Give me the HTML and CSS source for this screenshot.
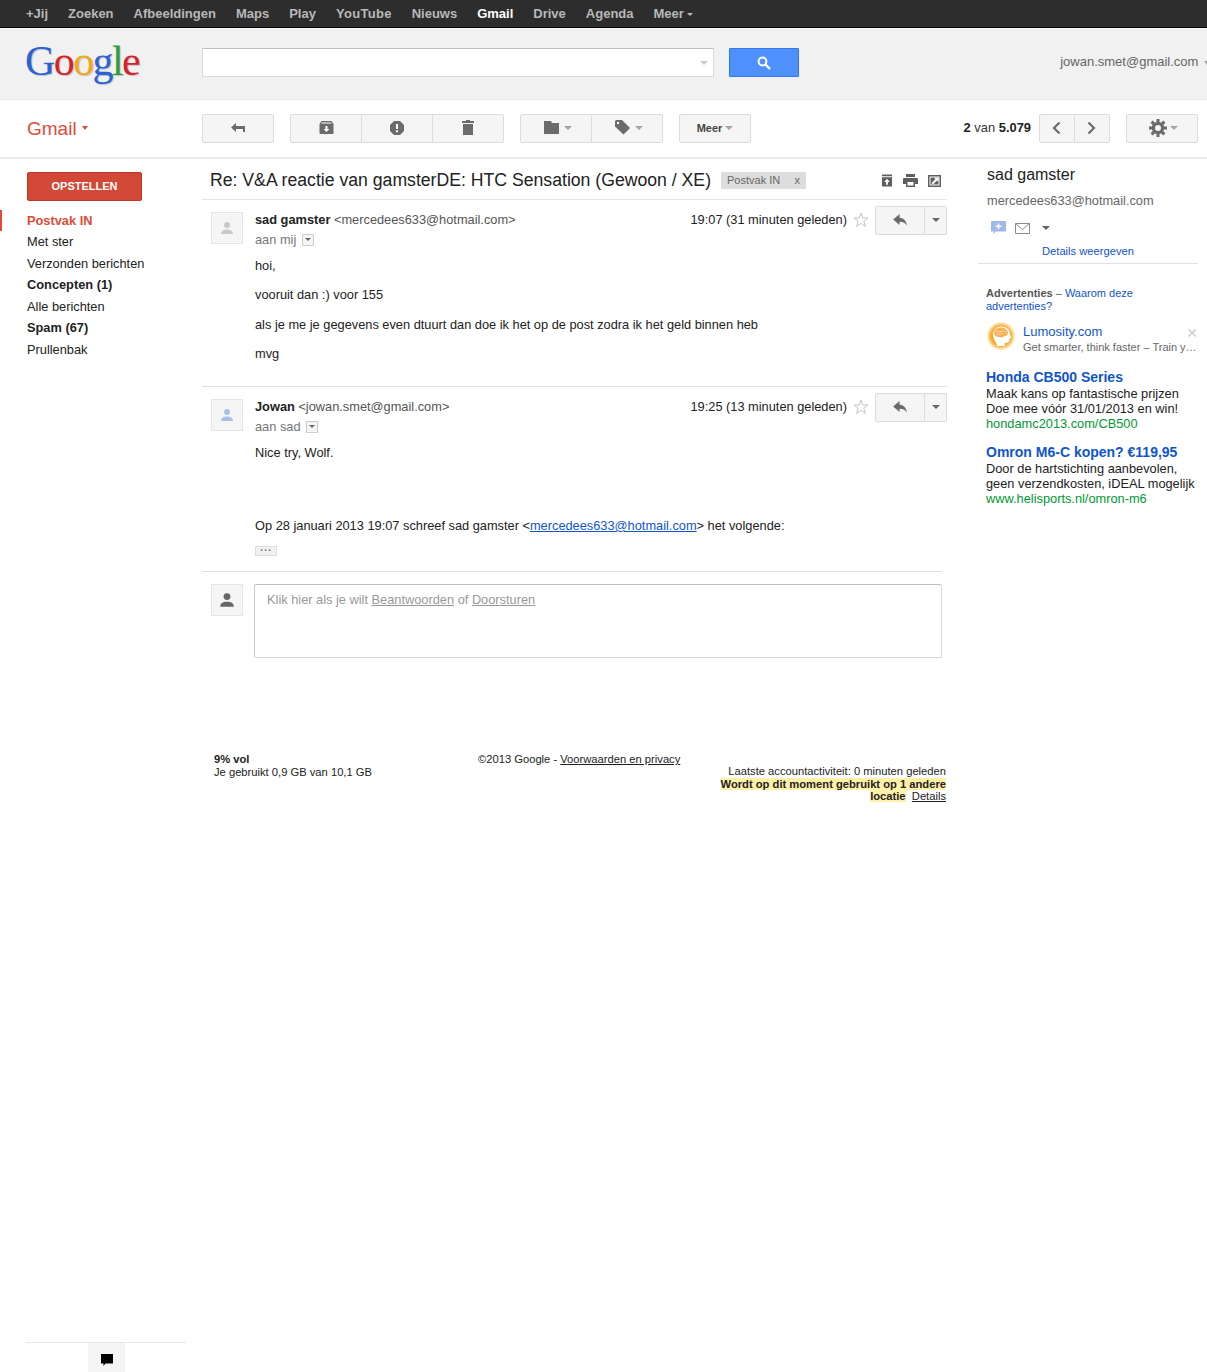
FILE: index.html
```html
<!DOCTYPE html>
<html lang="nl">
<head>
  <meta charset="UTF-8">
  <meta name="viewport" content="width=device-width, initial-scale=1.0">
  <title>Gmail - Re: V&amp;A reactie van gamsterDE</title>
  <link rel="stylesheet" href="styles.css">
</head>
<body>
  <!-- Zwarte balk -->
  <nav class="topbar">
    <a>+Jij</a><a>Zoeken</a><a>Afbeeldingen</a><a>Maps</a><a>Play</a><a class="wide">YouTube</a><a>Nieuws</a><a class="active">Gmail</a><a>Drive</a><a>Agenda</a><a>Meer <i class="caret caret-light"></i></a>
  </nav>

  <!-- Logo en zoeken -->
  <header class="searchbar">
    <div class="logo"><span class="c-blue">G</span><span class="c-red">o</span><span class="c-yellow">o</span><span class="c-blue">g</span><span class="c-green">l</span><span class="c-red">e</span></div>
    <div class="searchbox"><i class="caret caret-pale"></i></div>
    <button class="searchbtn">
      <svg width="14" height="14" viewBox="0 0 14 14"><circle cx="5.5" cy="5.5" r="3.9" fill="none" stroke="#fff" stroke-width="2"/><path d="M8.4 8.4 13 13" stroke="#fff" stroke-width="2.4"/></svg>
    </button>
    <div class="account">jowan.smet@gmail.com <i class="caret caret-grey"></i></div>
  </header>

  <!-- Knoppenbalk -->
  <div class="toolbar">
    <div class="gmail-label">Gmail <i class="caret caret-red"></i></div>
    <div class="btn-group first">
      <button class="tbtn">
        <svg width="16" height="12" viewBox="0 0 16 12"><path d="M6 1 1 5.5 6 10V7h7v3h2V4H6z" fill="#6b6b6b"/></svg>
      </button>
    </div>
    <div class="btn-group">
      <button class="tbtn">
        <svg width="15" height="13" viewBox="0 0 14 13"><path d="M2 0h10l2 3v9a1 1 0 0 1-1 1H1a1 1 0 0 1-1-1V3z" fill="#6b6b6b"/><path d="M2 2h10" stroke="#fff"/><path d="M6 5h2v3h2l-3 3-3-3h2z" fill="#fff"/></svg>
      </button>
      <button class="tbtn">
        <svg width="14" height="14" viewBox="0 0 14 14"><path d="M4 0h6l4 4v6l-4 4H4l-4-4V4z" fill="#6b6b6b"/><path d="M6 3h2v5H6zM6 9.2h2v2H6z" fill="#fff"/></svg>
      </button>
      <button class="tbtn">
        <svg width="12" height="15" viewBox="0 0 12 15"><path d="M4 0h4v1h4v2H0V1h4zM1 4h10v11H1z" fill="#6b6b6b"/></svg>
      </button>
    </div>
    <div class="btn-group">
      <button class="tbtn tbtn-menu">
        <svg width="15" height="13" viewBox="0 0 15 13"><path d="M0 0h7l1 2h7v11H0z" fill="#6b6b6b"/></svg>
        <i class="caret caret-grey"></i>
      </button>
      <button class="tbtn tbtn-menu">
        <svg width="15" height="15" viewBox="0 0 15 15"><path d="M0 1.500A1.500 1.500 0 0 1 1.500 0H7l8 8-6.500 6.500L0 6.500z" fill="#6b6b6b"/><circle cx="3" cy="3" r="1.200" fill="#f5f5f5"/></svg>
        <i class="caret caret-grey"></i>
      </button>
    </div>
    <div class="btn-group">
      <button class="tbtn tbtn-text">Meer <i class="caret caret-grey"></i></button>
    </div>
    <div class="pager"><b>2</b> van <b>5.079</b></div>
    <div class="btn-group nav-group">
      <button class="tbtn">
        <svg width="9" height="14" viewBox="0 0 9 14"><path d="M7.500 1.500 2 7l5.500 5.500" fill="none" stroke="#6b6b6b" stroke-width="2.200"/></svg>
      </button>
      <button class="tbtn">
        <svg width="9" height="14" viewBox="0 0 9 14"><path d="M1.500 1.500 7 7l-5.500 5.500" fill="none" stroke="#6b6b6b" stroke-width="2.200"/></svg>
      </button>
    </div>
    <div class="btn-group gear-group">
      <button class="tbtn tbtn-menu">
        <svg width="18" height="18" viewBox="0 0 18 18"><circle cx="9" cy="9" r="4.600" fill="none" stroke="#6b6b6b" stroke-width="3.200"/><path d="M9 0v18M0 9h18M2.600 2.600l12.800 12.800M15.400 2.600 2.600 15.400" stroke="#6b6b6b" stroke-width="3" stroke-dasharray="3.200 11.600"/></svg>
        <i class="caret caret-grey"></i>
      </button>
    </div>
  </div>

  <div class="layout">
    <!-- Linkerkolom -->
    <aside class="sidebar">
      <button class="compose">OPSTELLEN</button>
      <ul class="labels">
        <li class="current">Postvak IN</li>
        <li>Met ster</li>
        <li>Verzonden berichten</li>
        <li class="bold">Concepten (1)</li>
        <li>Alle berichten</li>
        <li class="bold">Spam (67)</li>
        <li>Prullenbak</li>
      </ul>
      <div class="chat-tabs">
        <div class="chat-tab">
          <svg width="14" height="14" viewBox="0 0 14 14"><path d="M1 1h12v9.500H5.500L3.500 13v-2.500H1z" fill="#000"/></svg>
        </div>
      </div>
    </aside>

    <!-- Gesprek -->
    <main class="thread">
      <div class="subject">
        <h2>Re: V&amp;A reactie van gamsterDE: HTC Sensation (Gewoon / XE)</h2>
        <span class="tag">Postvak IN <span class="tag-x">x</span></span>
        <div class="subject-icons">
          <svg width="12" height="13" viewBox="0 0 13 13"><path d="M1 0h11v2H1zM1 3h11v10H1z" fill="#5f5f5f"/><path d="M6.500 4.500 9.500 8H7.500v3h-2V8h-2z" fill="#fff"/></svg>
          <svg width="15" height="13" viewBox="0 0 15 13"><path d="M3 0h9v3H3zM1 4h13a1 1 0 0 1 1 1v5h-3v3H3v-3H0V5a1 1 0 0 1 1-1z" fill="#5f5f5f"/><path d="M4.500 8h6v3.500h-6z" fill="#fff"/></svg>
          <svg width="13" height="13" viewBox="0 0 13 13"><path d="M0 1h13v12H0z" fill="#5f5f5f"/><path d="M1.500 2.500h10v9h-10z" fill="#fff"/><path d="M2.500 3.500h8v7h-8z" fill="#5f5f5f"/><path d="M6 3.500h4.500V8L9 6.500 5 10.500 3.500 9l4-4z" fill="#fff"/></svg>
        </div>
      </div>

      <article class="message msg-first">
        <div class="avatar avatar-pale">
          <svg width="14" height="14" viewBox="0 0 14 14"><circle cx="7" cy="4" r="3" fill="#c9c9c9"/><path d="M1 13c0-3 2-4.500 6-4.500s6 1.500 6 4.500z" fill="#c9c9c9"/></svg>
        </div>
        <div class="msg-body">
          <div class="msg-head">
            <div class="msg-from">
              <div><b>sad gamster</b> <span class="addr">&lt;mercedees633@hotmail.com&gt;</span></div>
              <div class="to">aan mij <i class="to-more"></i></div>
            </div>
            <div class="msg-date">19:07 (31 minuten geleden)</div>
            <svg class="star" width="16" height="16" viewBox="0 0 16 16"><path d="M8 1l1.800 5h5.200l-4.200 3.200 1.600 5.300L8 11.300l-4.400 3.200 1.600-5.300L1 6h5.200z" fill="none" stroke="#c4c4c4"/></svg>
            <div class="btn-group reply-group">
              <button class="tbtn">
                <svg width="15" height="12" viewBox="0 0 16 13"><path d="M7 0 0 6l7 6V8.500c3.500 0 6 1 8 4-.5-4.500-3-8-8-8.500z" fill="#6b6b6b"/></svg>
              </button>
              <button class="tbtn"><i class="caret caret-dark"></i></button>
            </div>
          </div>
          <div class="msg-text">
            <p>hoi,</p>
            <p>vooruit dan :) voor 155</p>
            <p>als je me je gegevens even dtuurt dan doe ik het op de post zodra ik het geld binnen heb</p>
            <p>mvg</p>
          </div>
        </div>
      </article>

      <article class="message msg-second">
        <div class="avatar">
          <svg width="14" height="14" viewBox="0 0 14 14"><circle cx="7" cy="4" r="3" fill="#a8c0ea"/><path d="M1 13c0-3 2-4.500 6-4.500s6 1.500 6 4.500z" fill="#a8c0ea"/></svg>
        </div>
        <div class="msg-body">
          <div class="msg-head">
            <div class="msg-from">
              <div><b>Jowan</b> <span class="addr">&lt;jowan.smet@gmail.com&gt;</span></div>
              <div class="to">aan sad <i class="to-more"></i></div>
            </div>
            <div class="msg-date">19:25 (13 minuten geleden)</div>
            <svg class="star" width="16" height="16" viewBox="0 0 16 16"><path d="M8 1l1.800 5h5.200l-4.200 3.200 1.600 5.300L8 11.300l-4.400 3.200 1.600-5.300L1 6h5.200z" fill="none" stroke="#c4c4c4"/></svg>
            <div class="btn-group reply-group">
              <button class="tbtn">
                <svg width="15" height="12" viewBox="0 0 16 13"><path d="M7 0 0 6l7 6V8.500c3.500 0 6 1 8 4-.5-4.500-3-8-8-8.500z" fill="#6b6b6b"/></svg>
              </button>
              <button class="tbtn"><i class="caret caret-dark"></i></button>
            </div>
          </div>
          <div class="msg-text">
            <p>Nice try, Wolf.</p>
            <p class="quote-line">Op 28 januari 2013 19:07 schreef sad gamster &lt;<a>mercedees633@hotmail.com</a>&gt; het volgende:</p>
            <div class="ellipsis">...</div>
          </div>
        </div>
      </article>

      <div class="reply-row">
        <div class="avatar">
          <svg width="16" height="16" viewBox="0 0 14 14"><circle cx="7" cy="4" r="3" fill="#666"/><path d="M1 13c0-3 2-4.500 6-4.500s6 1.500 6 4.500z" fill="#666"/></svg>
        </div>
        <div class="reply-box">Klik hier als je wilt <u>Beantwoorden</u> of <u>Doorsturen</u></div>
      </div>

      <footer class="foot">
        <div class="foot-left"><b>9% vol</b><br>Je gebruikt 0,9 GB van 10,1 GB</div>
        <div class="foot-mid">©2013 Google - <u>Voorwaarden en privacy</u></div>
        <div class="foot-right">
          Laatste accountactiviteit: 0 minuten geleden<br>
          <b class="notice">Wordt op dit moment gebruikt op 1 andere</b><br>
          <b class="notice">locatie</b>&nbsp; <u>Details</u>
        </div>
      </footer>
    </main>

    <!-- Rechterkolom -->
    <aside class="people">
      <div class="person">
        <div class="person-name">sad gamster</div>
        <div class="person-mail">mercedees633@hotmail.com</div>
        <div class="person-icons">
          <svg width="15" height="14" viewBox="0 0 15 14"><path d="M0 0h15v10.500H4.500L2.500 13.500v-3H0z" fill="#a0b8e8"/><path d="M6.700 2.500h1.600v2h2v1.500h-2v2H6.700V6h-2V4.500h2z" fill="#fff"/></svg>
          <svg width="15" height="11" viewBox="0 0 15 11"><path d="M.5.500h14v10H.5zM.5.500l7 6 7-6" fill="none" stroke="#8c8c8c"/></svg>
          <i class="caret caret-dark"></i>
        </div>
        <a class="person-details">Details weergeven</a>
      </div>
      <div class="ads">
        <div class="ads-head"><b>Advertenties</b> – <a>Waarom deze</a><br><a>advertenties?</a></div>
        <div class="ad-first">
          <svg width="28" height="30" viewBox="0 0 28 30"><defs><radialGradient id="glow"><stop offset="0.7" stop-color="#f7a92b"/><stop offset="1" stop-color="#fff6d8"/></radialGradient></defs><circle cx="14" cy="15" r="14" fill="url(#glow)"/><path d="M6 13C6 8 10 5.500 14.500 5.500S23 8.500 23 13c0 1.500 1.500 3.500 1 4s-1.500.5-1.500 1 0 3-1.500 3.500-2 0-3 .5l-.5 3H10c0-2-1-3.500-2-5s-2-4-2-7z" fill="#fff"/><path d="M7 12c0-4 3.500-5.500 7-5.500s7 2 7 5.500c0 2-2 3.500-4 3-1 1.500-3 2-4 1-2 .5-6-1-6-4z" fill="#f6b25a"/><path d="M9 10.500c2-1 3 .5 5 0s3-1 5 .5M10 13.500c2-.5 3-1.500 5-1" fill="none" stroke="#fbd9a3"/></svg>
          <div class="ad-first-text">
            <a>Lumosity.com</a>
            <div>Get smarter, think faster – Train y…</div>
          </div>
          <span class="ad-close">✕</span>
        </div>
        <div class="ad">
          <a class="ad-title">Honda CB500 Series</a>
          <div>Maak kans op fantastische prijzen</div>
          <div>Doe mee vóór 31/01/2013 en win!</div>
          <div class="ad-url">hondamc2013.com/CB500</div>
        </div>
        <div class="ad">
          <a class="ad-title">Omron M6-C kopen? €119,95</a>
          <div>Door de hartstichting aanbevolen,</div>
          <div>geen verzendkosten, iDEAL mogelijk</div>
          <div class="ad-url">www.helisports.nl/omron-m6</div>
        </div>
      </div>
    </aside>
  </div>
</body>
</html>
```

FILE: styles.css
```css
/* Algemeen */
html, body {
  margin: 0;
  padding: 0;
  height: 100%;
}

body {
  font-family: "Liberation Sans", Arial, sans-serif;
  font-size: 12.8px;
  color: #222;
  background: #fff;
  display: flex;
  flex-direction: column;
  min-height: 1372px;
  overflow: hidden;
}

button {
  font-family: inherit;
  cursor: pointer;
}

.caret {
  display: inline-block;
  width: 0;
  height: 0;
  border-left: 4px solid transparent;
  border-right: 4px solid transparent;
  border-top: 4px solid #aaa;
  vertical-align: middle;
}

.caret-light { border-top-color: #bbb; border-left-width: 3px; border-right-width: 3px; border-top-width: 3px; }
.caret-pale { border-top-color: #c8c8c8; }
.caret-grey { border-top-color: #a5a5a5; }
.caret-red { border-top-color: #dd4b39; border-left-width: 3.500px; border-right-width: 3.500px; }
.caret-dark { border-top-color: #666; }

/* Zwarte balk */
.topbar {
  height: 27px;
  background: #2d2d2d;
  border-bottom: 1px solid #000;
  display: flex;
  align-items: center;
  padding-left: 26px;
  gap: 20px;
  font-size: 13px;
  font-weight: bold;
  color: #b8b8b8;
  flex: none;
}

.topbar .active {
  color: #fff;
}

.topbar .wide {
  letter-spacing: 0.3px;
}

/* Logo en zoeken */
.searchbar {
  height: 71px;
  background: #f1f1f1;
  border-bottom: 1px solid #e5e5e5;
  display: flex;
  align-items: flex-start;
  flex: none;
}

.logo {
  width: 177px;
  padding-left: 25px;
  font-family: "Liberation Serif", serif;
  font-size: 42px;
  line-height: 66px;
  letter-spacing: -1.600px;
  text-shadow: 1px 1px 1px rgba(0, 0, 0, 0.2);
}

.c-blue { color: #2a63d8; }
.c-red { color: #d5232b; }
.c-yellow { color: #efa91d; }
.c-green { color: #2f9a3c; }

.searchbox {
  width: 505px;
  height: 27px;
  margin-top: 20px;
  background: #fff;
  border: 1px solid #d9d9d9;
  border-top-color: #c0c0c0;
  border-radius: 1px;
  display: flex;
  align-items: center;
  justify-content: flex-end;
  padding-right: 5px;
}

.searchbtn {
  width: 70px;
  height: 29px;
  margin: 20px 0 0 15px;
  background: #4d90fe;
  border: 1px solid #3079ed;
  border-radius: 1px;
  padding: 0;
  display: flex;
  align-items: center;
  justify-content: center;
}

.account {
  margin-left: auto;
  margin-top: 26px;
  margin-right: -3px;
  font-size: 13px;
  color: #666;
  white-space: nowrap;
}

.account .caret {
  border-left-width: 3px;
  border-right-width: 3px;
  margin-left: 2px;
}

/* Knoppenbalk */
.toolbar {
  height: 59px;
  border-bottom: 2px solid #ebebeb;
  display: flex;
  align-items: flex-start;
  padding-top: 14px;
  box-sizing: border-box;
  flex: none;
}

.gmail-label {
  width: 175px;
  padding-left: 27px;
  color: #dd4b39;
  font-size: 19px;
  line-height: 29px;
}

.gmail-label .caret {
  margin-bottom: 4px;
}

.btn-group {
  display: flex;
  height: 29px;
  margin-right: 16px;
}

.tbtn {
  width: 71px;
  height: 29px;
  padding: 0 0 2px;
  background: #f5f5f5;
  border: 1px solid #dcdcdc;
  border-left-width: 0;
  display: flex;
  align-items: center;
  justify-content: center;
  gap: 5px;
}

.tbtn:first-child {
  width: 72px;
  border-left-width: 1px;
  border-radius: 2px 0 0 2px;
}

.tbtn:last-child {
  border-radius: 0 2px 2px 0;
}

.tbtn:only-child {
  border-radius: 2px;
}

.tbtn-menu {
  padding-left: 3px;
}

.tbtn-text {
  font-size: 11px;
  font-weight: bold;
  color: #444;
  gap: 3px;
}

.pager {
  margin-left: auto;
  margin-right: 8px;
  font-size: 12.900px;
  line-height: 27px;
  color: #333;
}

.pager b {
  color: #222;
}

.nav-group {
  margin-right: 16px;
}

.nav-group .tbtn {
  width: 35.500px;
}

.gear-group {
  margin-right: 9px;
}

.gear-group .tbtn {
  gap: 3px;
}

/* Kolommen */
.layout {
  flex: 1;
  display: flex;
  min-height: 0;
}

.sidebar {
  width: 202px;
  flex: none;
  display: flex;
  flex-direction: column;
  padding-top: 13px;
  box-sizing: border-box;
}

.compose {
  width: 115px;
  height: 29px;
  margin-left: 27px;
  background: #d14836;
  border: 1px solid #c13726;
  border-radius: 2px;
  color: #fff;
  font-size: 11px;
  font-weight: bold;
  padding: 0 0 2px;
}

.labels {
  list-style: none;
  margin: 8.500px 0 0;
  padding: 0;
  line-height: 21.500px;
  color: #222;
}

.labels li {
  padding-left: 27px;
  height: 21.500px;
}

.labels .current {
  color: #dd4b39;
  font-weight: bold;
  border-left: 2px solid #dd4b39;
  padding-left: 25px;
}

.labels .bold {
  font-weight: bold;
}

.chat-tabs {
  margin-top: auto;
  margin-left: 26px;
  width: 160px;
  height: 30px;
  border-top: 1px solid #e5e5e5;
  display: flex;
  padding-left: 62px;
  box-sizing: border-box;
}

.chat-tab {
  width: 37px;
  padding-top: 4px;
  box-sizing: border-box;
  background: #f5f5f5;
  display: flex;
  align-items: center;
  justify-content: center;
}

/* Gesprek */
.thread {
  width: 745px;
  flex: none;
}

.subject {
  height: 41px;
  display: flex;
  align-items: center;
  border-bottom: 1px solid #e5e5e5;
  padding: 2px 0 0 8px;
  box-sizing: border-box;
}

.subject h2 {
  margin: 0;
  font-size: 17.650px;
  font-weight: normal;
  color: #222;
  white-space: nowrap;
}

.tag {
  margin-left: 10px;
  background: #ddd;
  color: #666;
  font-size: 11px;
  height: 17px;
  line-height: 17px;
  padding: 0 6px;
  white-space: nowrap;
  display: flex;
  justify-content: space-between;
  width: 73px;
}

.subject-icons {
  margin-left: auto;
  display: flex;
  gap: 10px;
  padding-right: 6px;
  align-items: center;
}

.message {
  display: flex;
  padding: 6px 0 0 9px;
  box-sizing: border-box;
}

.msg-first {
  height: 187px;
  border-bottom: 1px solid #e0e0e0;
}

.msg-second {
  height: 184px;
}

.avatar {
  width: 32px;
  height: 32px;
  box-sizing: border-box;
  margin-top: 6px;
  background: #f5f5f5;
  border: 1px solid #e5e5e5;
  display: flex;
  align-items: center;
  justify-content: center;
  flex: none;
}

.avatar-pale {
  background: #f5f5f5;
}

.msg-body {
  flex: 1;
  min-width: 0;
  padding-left: 12px;
}

.msg-head {
  display: flex;
  align-items: flex-start;
  height: 42px;
}

.msg-from {
  flex: 1;
  padding-top: 4px;
  line-height: 20px;
}

.addr {
  color: #555;
}

.to {
  color: #777;
}

.to-more {
  display: inline-block;
  width: 12px;
  height: 12px;
  box-sizing: border-box;
  border: 1px solid #ccc;
  background: #f5f5f5;
  margin-left: 2px;
  vertical-align: -2px;
  position: relative;
}

.to-more::after {
  content: "";
  position: absolute;
  left: 2px;
  top: 3px;
  border-left: 3px solid transparent;
  border-right: 3px solid transparent;
  border-top: 3px solid #666;
}

.msg-date {
  padding-top: 4px;
  line-height: 20px;
  color: #222;
  white-space: nowrap;
}

.star {
  margin: 6px 6px 0;
  flex: none;
}

.reply-group {
  margin-right: 0;
}

.reply-group .tbtn {
  width: 50px;
}

.reply-group .tbtn:last-child {
  width: 22px;
}

.msg-text {
  margin-top: 10px;
}

.msg-text p {
  margin: 0 0 13.400px;
  line-height: 16px;
}

.msg-text .quote-line {
  margin-top: 57px;
  margin-bottom: 12px;
}

.msg-text a {
  color: #1155cc;
  text-decoration: underline;
}

.ellipsis {
  width: 20px;
  height: 8px;
  background: #f1f1f1;
  border: 1px solid #ddd;
  color: #777;
  font-size: 11px;
  line-height: 1px;
  letter-spacing: 1px;
  text-align: center;
  font-weight: bold;
}

.reply-row {
  display: flex;
  width: 740px;
  box-sizing: border-box;
  border-top: 1px solid #e0e0e0;
  padding: 12px 0 0 9px;
}

.reply-row .avatar {
  margin-top: 0;
}

.reply-box {
  width: 688px;
  height: 74px;
  box-sizing: border-box;
  margin-left: 11px;
  border: 1px solid #d8d8d8;
  border-top-color: #c0c0c0;
  border-left-color: #c8c8c8;
  border-radius: 2px;
  padding: 7px 12px;
  color: #999;
  line-height: 16px;
}

.foot {
  display: flex;
  font-size: 11.200px;
  color: #222;
  margin-top: 95px;
  line-height: 13px;
}

.foot-left {
  width: 264px;
  padding-left: 12px;
  box-sizing: border-box;
  flex: none;
  line-height: 13px;
}

.foot-mid {
  flex: none;
  margin-left: 12px;
}

.foot-right {
  margin-left: auto;
  margin-right: 1px;
  width: 240px;
  padding-top: 12px;
  text-align: right;
  line-height: 12.500px;
}

.notice {
  background: #fff1a8;
}

/* Rechterkolom */
.people {
  width: 220px;
  margin-left: 31px;
  flex: none;
}

.person {
  border-bottom: 1px solid #e0e0e0;
  height: 105px;
  padding-left: 9px;
  box-sizing: border-box;
}

.person-name {
  font-size: 16px;
  line-height: 20px;
  padding-top: 6px;
  color: #222;
}

.person-mail {
  color: #666;
  line-height: 16px;
  margin-top: 8px;
}

.person-icons {
  display: flex;
  align-items: center;
  gap: 9px;
  margin: 11px 0 0 4px;
  height: 16px;
}

.person-icons .caret {
  margin-left: 3px;
}

.person-details {
  display: block;
  text-align: center;
  color: #1155cc;
  font-size: 11.200px;
  line-height: 14px;
  margin-top: 8px;
  padding-right: 9px;
}

.ads {
  padding: 23px 0 0 8px;
}

.ads a {
  color: #1155cc;
}

.ads-head {
  font-size: 11px;
  line-height: 13px;
  color: #555;
}

.ad-first {
  display: flex;
  margin: 8px 0 0 1px;
  padding-bottom: 1px;
  align-items: flex-start;
  gap: 8px;
  position: relative;
}

.ad-first-text {
  flex: 1;
  min-width: 0;
  white-space: nowrap;
  padding-top: 3px;
}

.ad-first-text a {
  display: block;
  font-size: 13px;
  line-height: 16px;
}

.ad-first-text div {
  font-size: 11px;
  color: #666;
  line-height: 14px;
}

.ad-close {
  position: absolute;
  right: 0;
  top: 4px;
  color: #ccc;
  font-size: 14px;
  font-weight: bold;
  font-family: "DejaVu Sans", sans-serif;
}

.ad {
  margin-top: 13.500px;
  line-height: 15px;
  color: #222;
  white-space: nowrap;
}

.ad-title {
  display: block;
  font-size: 14px;
  font-weight: bold;
  line-height: 17px;
}

.ad-url {
  color: #009933;
}
```
